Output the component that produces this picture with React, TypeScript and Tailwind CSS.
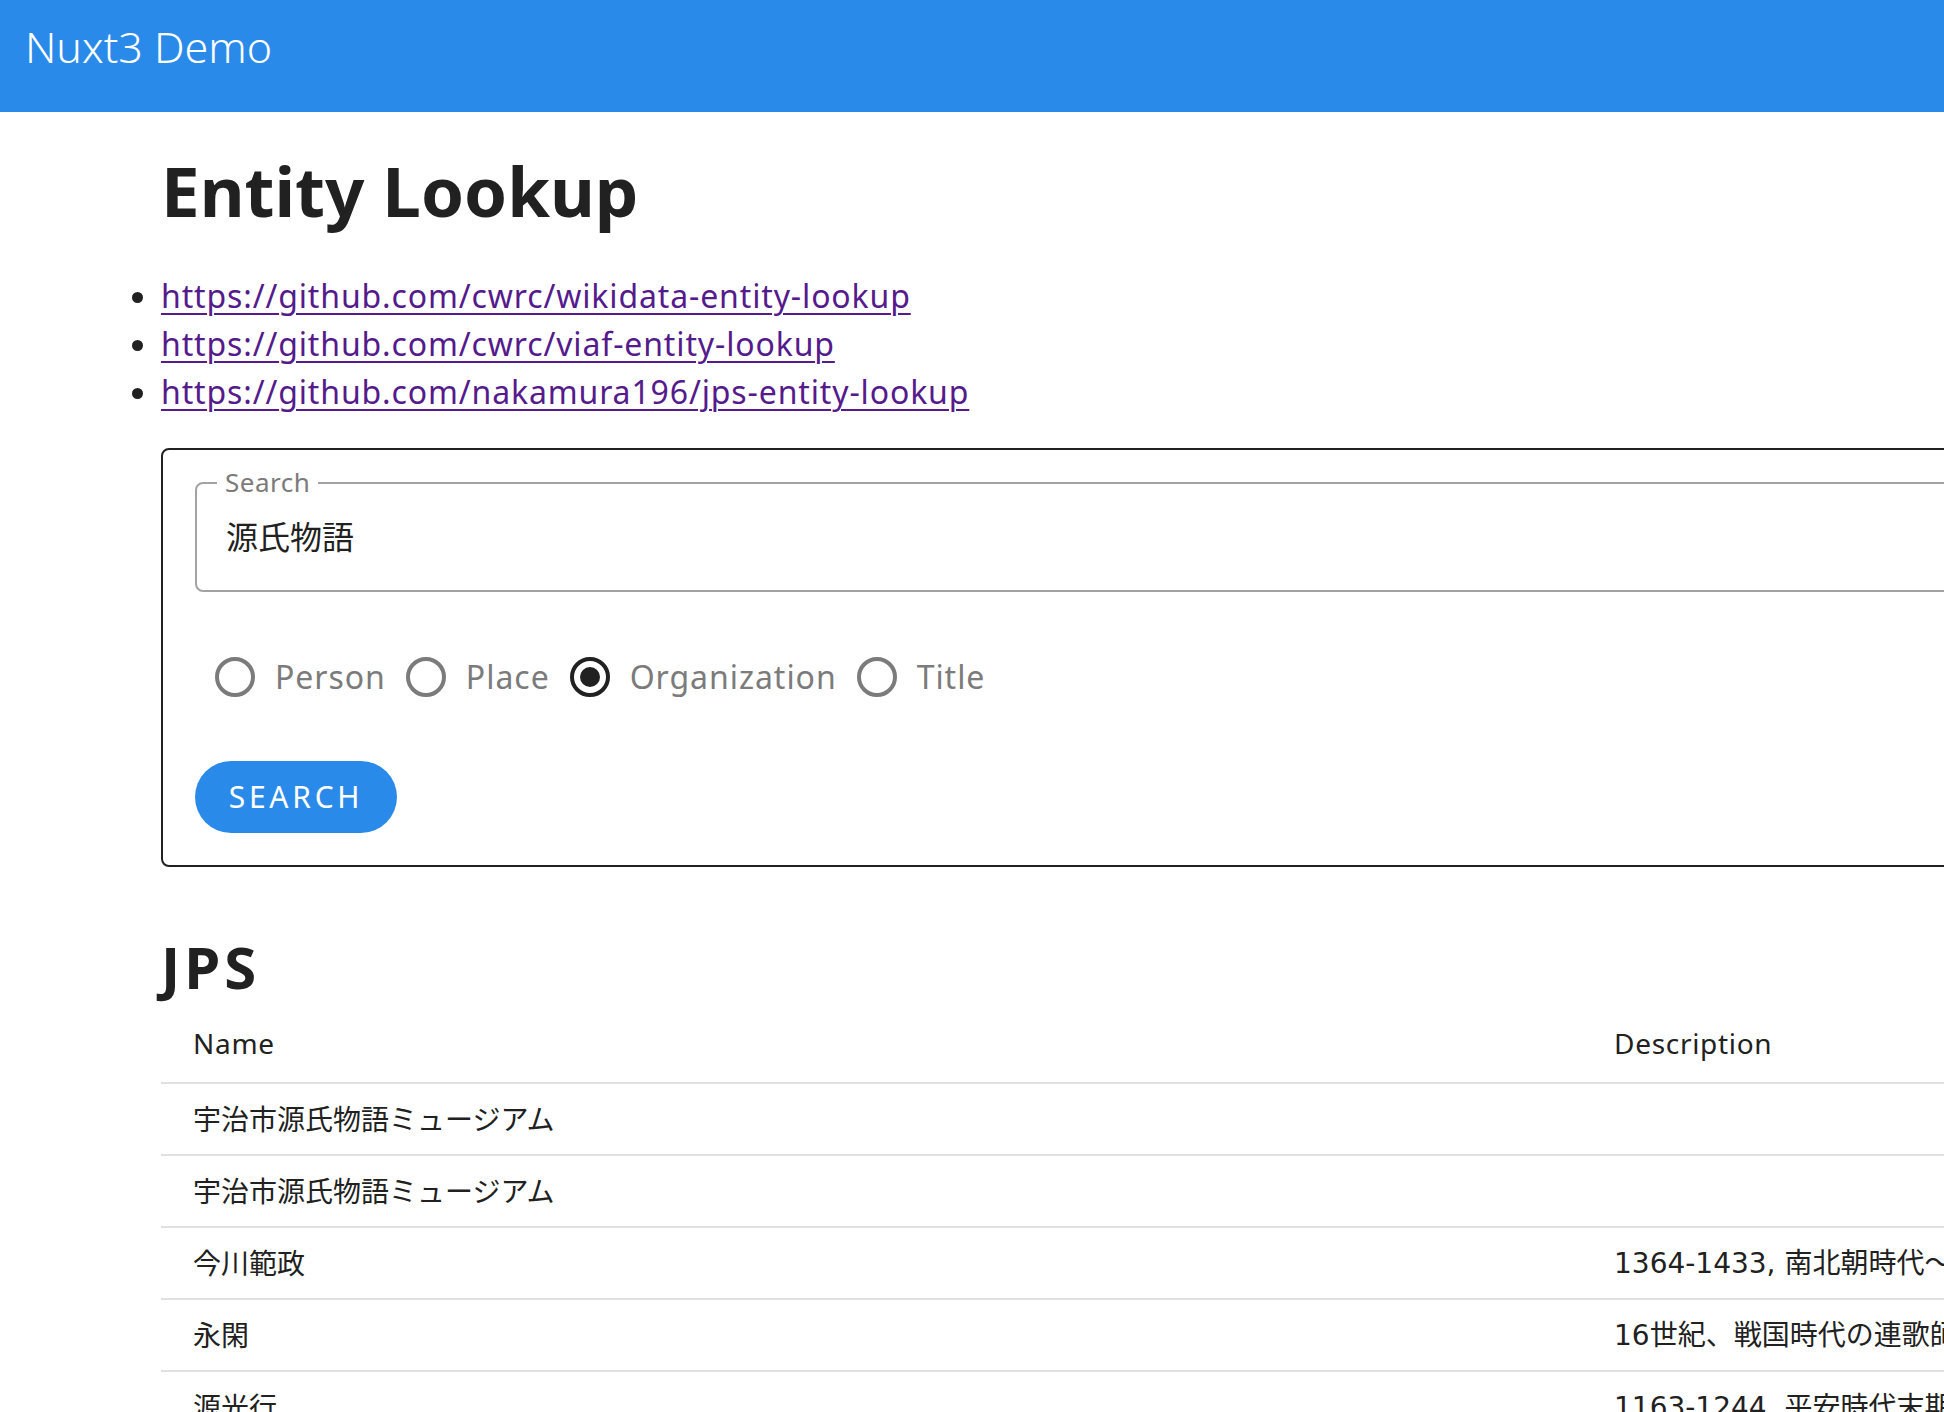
import { useState } from "react";

const font = '"Noto Sans", "Noto Sans CJK JP", sans-serif';

const links = [
    "https://github.com/cwrc/wikidata-entity-lookup",
    "https://github.com/cwrc/viaf-entity-lookup",
    "https://github.com/nakamura196/jps-entity-lookup",
];

const types = ["Person", "Place", "Organization", "Title"];

const rows = [
    { name: "宇治市源氏物語ミュージアム", description: "" },
    { name: "宇治市源氏物語ミュージアム", description: "" },
    { name: "今川範政", description: "1364-1433, 南北朝時代〜室町時代の武将、歌人" },
    { name: "永閑", description: "16世紀、戦国時代の連歌師" },
    { name: "源光行", description: "1163-1244, 平安時代末期〜鎌倉時代前期の政治家、文学者" },
];

// the digits in the reference are wide, DejaVu Sans is the closest match
function Description({ text }: { text: string }) {
    const m = text.match(/^([\x00-\x7F]+)(.*)$/);
    if (!m) return <>{text}</>;
    return (
        <>
            <span style={{ fontFamily: '"DejaVu Sans", sans-serif' }}>{m[1]}</span>
            {m[2]}
        </>
    );
}

function Radio({ label, checked, onSelect }: { label: string; checked: boolean; onSelect: () => void }) {
    return (
        <div className="flex items-center cursor-pointer" onClick={onSelect}>
            <div className="w-[80px] h-[80px] flex items-center justify-center">
                <svg width="40" height="40" viewBox="0 0 40 40">
                    <circle cx="20" cy="20" r="18" fill="none" stroke={checked ? "#212121" : "#7b7b7b"} strokeWidth="4" />
                    {checked ? <circle cx="20" cy="20" r="10" fill="#212121" /> : null}
                </svg>
            </div>
            <span className="text-[32px] text-[#7b7b7b] leading-none tracking-[0.03em]">{label}</span>
        </div>
    );
}

export default function App() {
    const [query, setQuery] = useState("源氏物語");
    const [type, setType] = useState("Organization");

    return (
        <div className="w-full h-[1412px] overflow-hidden bg-white text-[#212121]" style={{ fontFamily: font }}>
            <header className="h-[112px] bg-[#2a8ae9] pl-[25px] pt-[25px]">
                <span className="text-white text-[43px] font-light leading-none">Nuxt3 Demo</span>
            </header>

            <main className="w-[2400px] pl-[161px]">
                <h1 className="mt-[44px] text-[69px] font-bold leading-none">Entity Lookup</h1>

                <ul className="mt-[47px] list-disc text-[32px] leading-[48px]">
                    {links.map(link => (
                        <li key={link}>
                            <a href={link} className="text-[#551a8b] underline decoration-2 underline-offset-[5px] tracking-[0.027em]">{link}</a>
                        </li>
                    ))}
                </ul>

                <div className="mt-[32px] border-2 border-[#212121] rounded-lg p-8">
                    <div className="relative h-[110px] border-2 border-[#a3a3a3] rounded-lg flex items-center pl-[29px]">
                        <span className="absolute -top-[17px] left-[20px] bg-white px-[8px] text-[26px] leading-[30px] text-[#7b7b7b] tracking-[0.02em]">Search</span>
                        <input
                            value={query}
                            onChange={e => setQuery(e.target.value)}
                            className="w-full outline-none bg-transparent text-[32px] text-[#212121]"
                            style={{ fontFamily: font }}
                        />
                    </div>

                    <div className="mt-[45px] flex items-center h-[80px]">
                        {types.map(t => (
                            <Radio key={t} label={t} checked={type === t} onSelect={() => setType(t)} />
                        ))}
                    </div>

                    <button className="mt-[44px] w-[202px] h-[72px] rounded-full bg-[#2a8ae9] text-white text-[30px] tracking-[0.125em] leading-none">
                        SEARCH
                    </button>
                </div>

                <h2 className="mt-[71px] text-[58px] font-bold leading-none tracking-[0.07em]">JPS</h2>

                <div className="mt-[12px] text-[28px]">
                    <div className="flex h-[76px] pb-[4px] items-center border-b-2 border-[#e0e0e0] tracking-[0.025em]">
                        <div className="w-[1421px] shrink-0 px-8">Name</div>
                        <div className="px-8">Description</div>
                    </div>
                    {rows.map((row, i) => (
                        <div key={i} className="flex h-[72px] items-center border-b-2 border-[#e0e0e0]">
                            <div className="w-[1421px] shrink-0 px-8">{row.name}</div>
                            <div className="px-8 whitespace-nowrap">
                                <Description text={row.description} />
                            </div>
                        </div>
                    ))}
                </div>
            </main>
        </div>
    );
}
